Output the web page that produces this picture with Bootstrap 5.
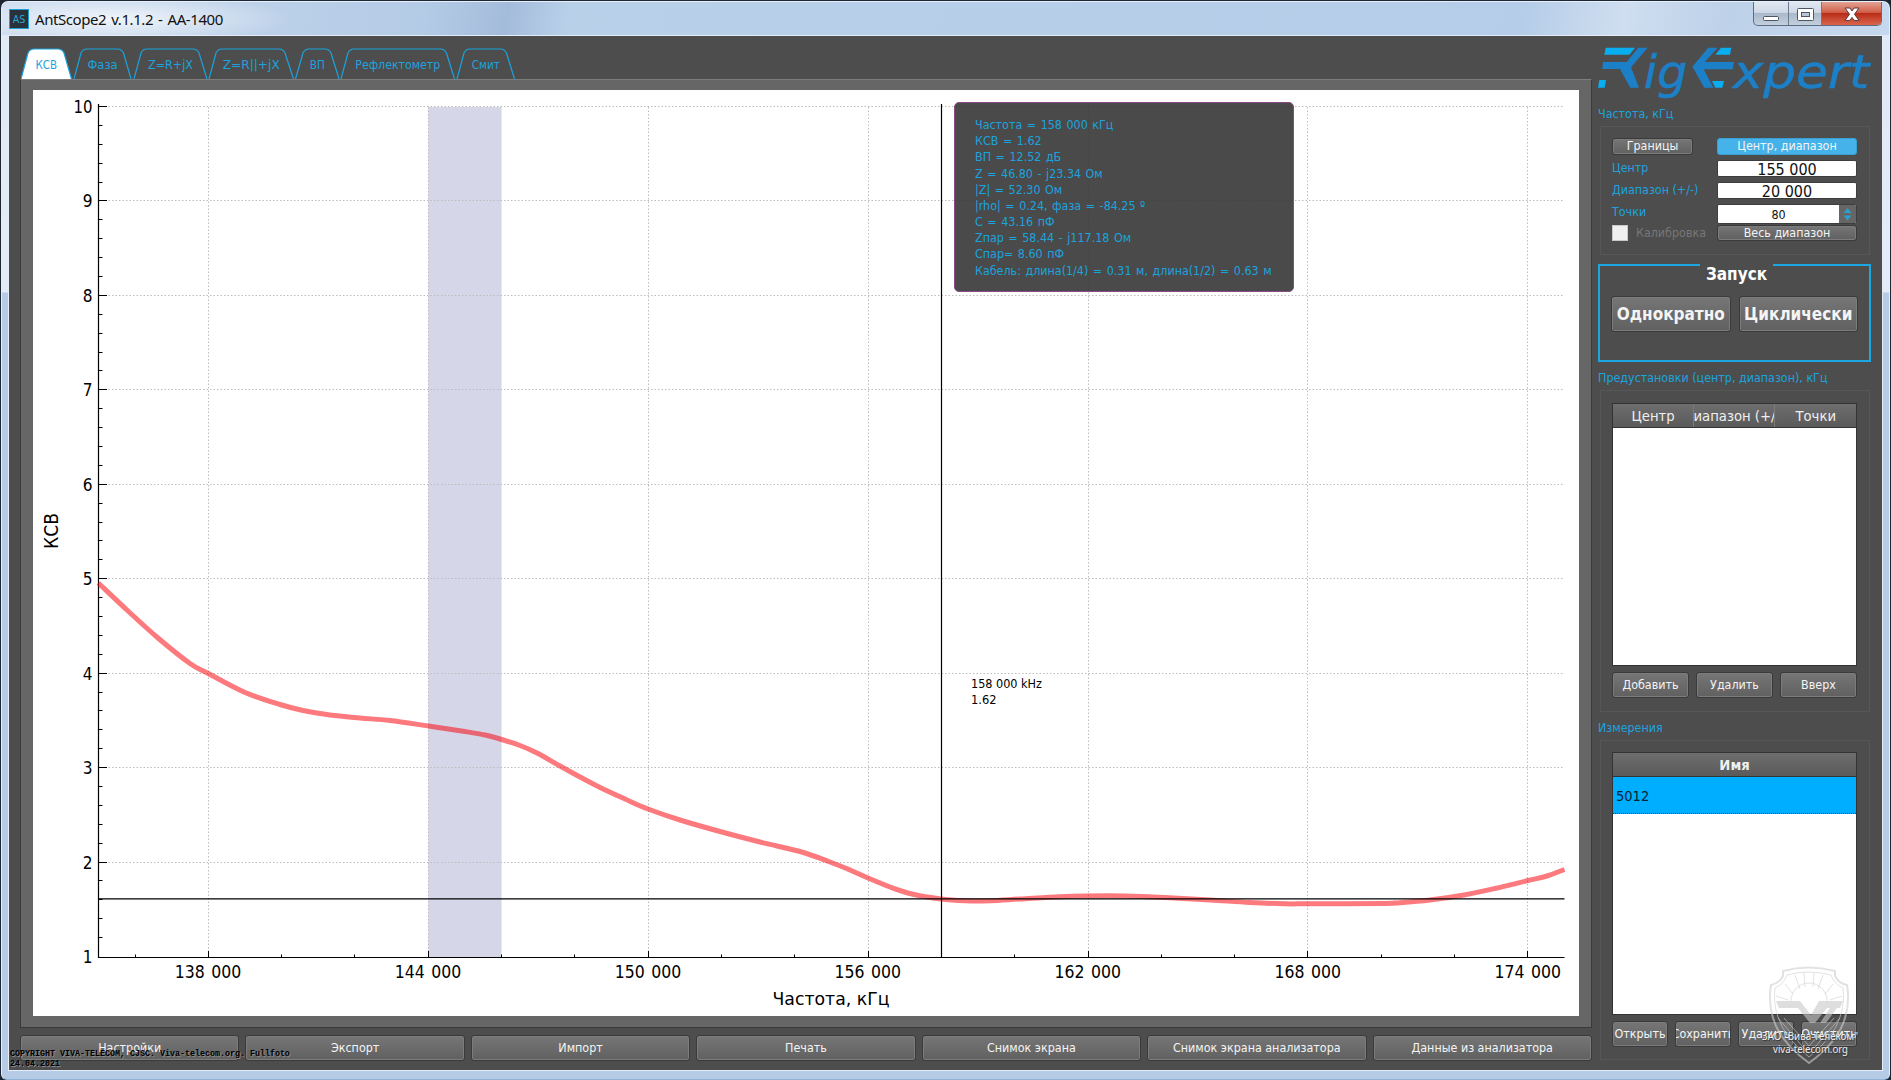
<!DOCTYPE html>
<html lang="ru">
  <head>
    <meta charset="UTF-8" />
    <meta name="viewport" content="width=device-width, initial-scale=1.0" />
    <title>AntScope2 v.1.1.2 - AA-1400</title>
    <link
      href="https://cdn.jsdelivr.net/npm/bootstrap@5.3.0/dist/css/bootstrap.min.css"
      rel="stylesheet"
    />
    <style>
      body {
        font-family: 'DejaVu Sans Condensed', 'Noto Sans', sans-serif;
        font-size: 12.4px;
        line-height: 16px;
        background-color: #1d2733;
        width: 1891px;
        height: 1080px;
        overflow: hidden;
      }

      .app-window {
        height: 1079px;
        margin: 1px 1px 0 1px;
        border: 1px solid #e6effa;
        border-bottom-color: #8fb4d8;
        border-radius: 7px 7px 6px 6px;
        background: linear-gradient(#dfe9f5 0, #e3ecf7 290px, #b5cbe6 291px, #b5cbe6 100%);
        padding: 0 6px 7px 6px;
      }

      .title-bar {
        height: 33px;
        margin: 0 -6px;
        padding-left: 7px;
        border-radius: 6px 6px 0 0;
        background:
          radial-gradient(ellipse 180px 26px at 110px 17px, rgba(255, 255, 255, 0.75), transparent),
          linear-gradient(100deg, #c9daee 0, #b4cbe6 420px, #a4bcdb 500px, #b9d0e9 560px, #b5cde8 1500px, #cfdef0 1600px, #bdd1e9 1700px, #c6d8ee 100%);
      }

      .app-icon {
        width: 20px;
        height: 20px;
        background-color: #29323a;
        border: 1px solid #1e9fd8;
        color: #2aa5dc;
        font-size: 10.5px;
        line-height: 18px;
      }

      .title-text {
        font-family: 'Noto Sans', sans-serif;
        font-size: 15px;
        color: #111;
        letter-spacing: -0.42px;
        word-spacing: 1.5px;
        margin-left: 6px;
      }

      .window-buttons {
        height: 24px;
        margin-right: 7px;
        border: 1px solid #5d6c80;
        border-top: 0;
        border-radius: 0 0 5px 5px;
        overflow: hidden;
        background: linear-gradient(#dfe7f1 0, #cfd9e6 45%, #aab9cb 50%, #c2cfde 100%);
      }

      .window-buttons span {
        width: 35px;
        border-right: 1px solid #6b7a8d;
      }

      .window-buttons span.max {
        width: 33px;
      }

      .window-buttons span.close-x {
        width: 59px;
        border: 0;
        background: linear-gradient(#e2a393 0, #d2604b 45%, #b92d17 50%, #d9654c 100%);
      }

      .client {
        height: 1036px;
        background-color: #4d4d4d;
        border: 1px solid #e4edf7;
        padding: 12px 11px 0 11px;
      }

      .main-pane {
        width: 1572px;
      }

      .tab-strip {
        height: 31px;
        margin-left: 1px;
      }

      .chart-panel {
        height: 949px;
        border: 1px solid #3a3a3a;
        border-top-color: #7d7d7d;
        background-color: #666;
        padding: 10px 12px 11px 12px;
      }

      .chart-box {
        background-color: #fff;
      }

      .marker-info {
        position: absolute;
        left: 921px;
        top: 12px;
        width: 340px;
        height: 190px;
        padding: 14px 0 0 20px;
        border: 1px solid #8a4a86;
        border-radius: 5px;
        background-color: rgba(54, 54, 54, 0.9);
        color: #1ba3dd;
        line-height: 16.17px;
        word-spacing: 1px;
        white-space: nowrap;
      }

      .btn-rig {
        --bs-btn-padding-x: 0;
        --bs-btn-padding-y: 0;
        --bs-btn-font-size: 12.4px;
        --bs-btn-line-height: 1;
        --bs-btn-color: #f4f4f4;
        --bs-btn-border-color: #3a3a3a;
        --bs-btn-border-radius: 3px;
        display: flex;
        align-items: center;
        justify-content: center;
        overflow: hidden;
        white-space: nowrap;
        background: linear-gradient(#767676, #606060);
        box-shadow: inset 0 0 0 1px #7c7c7c;
      }

      .btn-rig.active-mode {
        background: #45b3ea;
        border-color: #3aa0d4;
        box-shadow: none;
      }

      .btn-rig.run {
        font-size: 17px;
        font-weight: 700;
        height: 36px;
      }

      .bottom-bar {
        margin-top: 7px;
        gap: 6px;
      }

      .bottom-bar .btn-rig,
      .btn-h {
        height: 26px;
      }

      .side-pane {
        width: 273px;
        color: #1ba3dd;
      }

      .side-pane svg {
        overflow: visible;
      }

      .caption {
        height: 16px;
      }

      .group-box {
        border: 1px solid #575757;
        margin: 0 1px 0 2px;
        padding: 12px 12px 0 11px;
      }

      .form-grid {
        display: grid;
        grid-template-columns: 105px 140px;
        grid-template-rows: 17px 17px 17px 20px 16px;
        row-gap: 5px;
        margin-top: -1px;
      }

      .last-row {
        margin: -4px 0 4px 0;
      }

      .dim {
        color: #777;
      }

      .field {
        background-color: #fff;
        color: #111;
        text-align: center;
        border: 1px solid #3d3d3d;
        border-radius: 2px;
        font-size: 16px;
        overflow: hidden;
      }

      .field.big {
        line-height: 17px;
      }

      .field.spin {
        font-size: 12.4px;
        line-height: 19px;
      }

      .spin-arrows {
        width: 17px;
        background: #666;
      }

      .check-square {
        width: 16px;
        height: 16px;
        background: #efefef;
        border: 1px solid #c8c8c8;
      }

      .run-box {
        height: 98px;
        margin-top: 9px;
        border: 2px solid #1ba8e0;
        padding: 0 11px;
      }

      .run-title {
        width: 73px;
        margin: -4px auto 10px auto;
        position: relative;
        left: 2px;
        height: 24px;
        line-height: 24px;
        background-color: #4d4d4d;
        color: #fff;
        font-size: 17px;
        font-weight: 700;
      }

      .list-view {
        border: 1px solid #333;
        background-color: #fff;
        height: 263px;
      }

      .list-head {
        background: linear-gradient(#6e6e6e, #5a5a5a);
        border-bottom: 1px solid #333;
        color: #f0f0f0;
        font-size: 14.7px;
        height: 24px;
      }

      .list-head > div {
        overflow: hidden;
        white-space: nowrap;
        border-right: 1px solid #7b7b7b;
      }

      .list-head > div:last-child {
        border-right: 0;
      }

      .selected-row {
        height: 37px;
        background-color: #00aeff;
        border-bottom: 1px dotted #1b4b66;
        color: #0b2433;
        font-size: 14.5px;
        line-height: 38px;
        padding-left: 3px;
      }

      .list-actions {
        margin-top: 6px;
        gap: 7px;
      }

      .watermark {
        position: absolute;
        left: 1758px;
        top: 965px;
      }

      .copyright {
        position: absolute;
        left: 10px;
        top: 1049px;
        font-family: 'Liberation Mono', monospace;
        font-size: 8.33px;
        line-height: 10px;
        font-weight: 700;
        color: #000;
        text-shadow: 1px 1px 0 #8a8a8a;
        white-space: pre;
      }
    </style>
  </head>
  <body>
    <div class="app-window">
      <div class="title-bar d-flex justify-content-between">
        <div class="d-flex align-items-center">
          <div class="app-icon text-center">AS</div>
          <div class="title-text">AntScope2 v.1.1.2 - AA-1400</div>
        </div>
        <div class="window-buttons d-flex">
          <span class="d-flex align-items-center justify-content-center">
            <svg width="18" height="20"><rect x="1.5" y="12.5" width="15" height="4" rx="1" fill="#fff" stroke="#4b5563" /></svg>
          </span>
          <span class="max d-flex align-items-center justify-content-center">
            <svg width="19" height="20">
              <rect x="1.5" y="4.5" width="16" height="12" rx="1" fill="#fff" stroke="#4b5563" />
              <rect x="5.5" y="8.5" width="8" height="4" fill="#b9c6d5" stroke="#4b5563" />
            </svg>
          </span>
          <span class="close-x d-flex align-items-center justify-content-center">
            <svg width="18" height="20">
              <path d="M2 4h5l2 3 2-3h5l-4.500 6.200 4.500 6.200h-5l-2-3-2 3h-5l4.500-6.200z" fill="#fff" stroke="#5a3a3c" />
            </svg>
          </span>
        </div>
      </div>

      <div class="client d-flex justify-content-between">
        <div class="main-pane">
          <svg class="tab-strip d-block" id="tabs" width="1570" height="31" viewBox="21 48 1570 31"></svg>
          <div class="chart-panel">
            <div class="chart-box position-relative">
              <svg class="d-block" id="chart" width="1546" height="926" viewBox="33 90 1546 926"></svg>
              <div class="marker-info">
                <div>Частота = 158 000 кГц</div>
                <div>КСВ = 1.62</div>
                <div>ВП = 12.52 дБ</div>
                <div>Z = 46.80 - j23.34 Ом</div>
                <div>|Z| = 52.30 Ом</div>
                <div>|rho| = 0.24, фаза = -84.25 º</div>
                <div>C = 43.16 пФ</div>
                <div>Zпар = 58.44 - j117.18 Ом</div>
                <div>Cпар= 8.60 пФ</div>
                <div>Кабель: длина(1/4) = 0.31 м, длина(1/2) = 0.63 м</div>
              </div>
            </div>
          </div>
          <div class="bottom-bar d-flex">
            <button class="btn btn-rig w-100">Настройки</button>
            <button class="btn btn-rig w-100">Экспорт</button>
            <button class="btn btn-rig w-100">Импорт</button>
            <button class="btn btn-rig w-100">Печать</button>
            <button class="btn btn-rig w-100">Снимок экрана</button>
            <button class="btn btn-rig w-100">Снимок экрана анализатора</button>
            <button class="btn btn-rig w-100">Данные из анализатора</button>
          </div>
        </div>

        <div class="side-pane">
          <svg class="d-block" width="273" height="58" viewBox="84 144 819 174">
            <g fill="#1c80c8">
              <path d="M205 143h28l-50 59 24 61h-26l-31-56h-53l2-21h71z" />
              <path d="M415 143h28l-39 43h88l-4 22h-87l29 55h-27l-36-63z" />
            </g>
            <g fill="#08aef0">
              <path d="M107 143h88l-17 21h-75z" />
              <path d="M88 240h20l-4 23h-20z" />
              <path d="M453 143h31l-4 21h-44z" />
              <path d="M426 243h36l-5 20h-21z" />
            </g>
            <g fill="#1c80c8" stroke="#1c80c8" stroke-width="1.5" font-family="DejaVu Sans, sans-serif" font-size="138" font-style="italic">
              <text x="222" y="263" textLength="130" lengthAdjust="spacingAndGlyphs">ig</text>
              <text x="488" y="263" textLength="410" lengthAdjust="spacingAndGlyphs">xpert</text>
            </g>
          </svg>
          <div class="caption">Частота, кГц</div>
          <div class="group-box mt-1" style="height: 129px">
            <div class="form-grid">
              <button class="btn btn-rig me-4">Границы</button>
              <button class="btn btn-rig active-mode">Центр, диапазон</button>
              <div>Центр</div>
              <div class="field big">155 000</div>
              <div>Диапазон (+/-)</div>
              <div class="field big">20 000</div>
              <div>Точки</div>
              <div class="field spin d-flex">
                <div class="flex-fill">80</div>
                <svg class="spin-arrows" viewBox="0 0 17 18">
                  <path d="M4.500 8l4-5 4 5zM4.500 10.500l4 5 4-5z" fill="#2d9fc9" />
                </svg>
              </div>
              <div class="last-row dim d-flex align-items-center">
                <div class="check-square me-2"></div>
                Калибровка
              </div>
              <button class="btn btn-rig last-row">Весь диапазон</button>
            </div>
          </div>

          <div class="run-box">
            <div class="run-title text-center">Запуск</div>
            <div class="d-flex gap-2">
              <button class="btn btn-rig run w-50">Однократно</button>
              <button class="btn btn-rig run w-50">Циклически</button>
            </div>
          </div>

          <div class="caption mt-2">Предустановки (центр, диапазон), кГц</div>
          <div class="group-box mt-1" style="height: 322px">
            <div class="list-view">
              <div class="list-head d-flex">
                <div class="d-flex w-100 justify-content-center align-items-center">Центр</div>
                <div class="d-flex w-100 justify-content-center align-items-center">Диапазон (+/-)</div>
                <div class="d-flex w-100 justify-content-center align-items-center">Точки</div>
              </div>
            </div>
            <div class="list-actions d-flex">
              <button class="btn btn-rig btn-h w-100">Добавить</button>
              <button class="btn btn-rig btn-h w-100">Удалить</button>
              <button class="btn btn-rig btn-h w-100">Вверх</button>
            </div>
          </div>

          <div class="caption mt-2">Измерения</div>
          <div class="group-box mt-1" style="height: 320px; padding-top: 11px">
            <div class="list-view">
              <div class="list-head d-flex align-items-center justify-content-center fw-bold">Имя</div>
              <div class="selected-row">5012</div>
            </div>
            <div class="list-actions d-flex">
              <button class="btn btn-rig btn-h w-100">Открыть</button>
              <button class="btn btn-rig btn-h w-100">Сохранить</button>
              <button class="btn btn-rig btn-h w-100">Удалить</button>
              <button class="btn btn-rig btn-h w-100">Очистить</button>
            </div>
          </div>
        </div>
      </div>
    </div>

    <svg class="watermark" width="104" height="102" viewBox="1758 965 104 102">
      <g fill="none" stroke="#cfcfcf" stroke-opacity="0.6">
        <path d="M1783 971q26-7 52 0l0 5q3 7 12 9q3 17-2 33q-7 24-36 45q-29-21-36-45q-5-16-2-33q9-2 12-9z" stroke-width="2" />
        <path d="M1787 975q22-6 44 0q3 9 12 13q2 15-3 29q-6 20-31 40q-25-20-31-40q-5-14-3-29q9-4 12-13z" />
        <path d="M1804 973l1 14M1814 973l-1 14M1795 975l5 14M1823 975l-5 14M1785 984l8 10M1833 984l-8 10M1776 996l12 4M1842 996l-12 4" />
        <path d="M1791 1001a18 18 0 0 1 36 0" />
        <path d="M1778 1018l31 36 31-36M1784 1018l25 28 25-28" />
      </g>
      <path d="M1776 1001h24l11 14 8-14h24l-3 7h-3l-11 15h-6l10-15h-3l-12 15h-5l-12-15h-19z" fill="#c8c8c8" fill-opacity="0.6" />
      <g font-family="Noto Sans, sans-serif" font-size="11.5" fill="#eee" style="text-shadow: 1px 1px 1px #333">
        <text x="1762" y="1040" textLength="96" lengthAdjust="spacingAndGlyphs">ЗАО "Вива-Телеком"</text>
        <text x="1773" y="1053" textLength="75" lengthAdjust="spacingAndGlyphs">viva-telecom.org</text>
      </g>
    </svg>

    <div class="copyright">COPYRIGHT VIVA-TELECOM, CJSC. Viva-telecom.org. Fullfoto
24.04.2021</div>

    <script>
      // label, left foot, left top, right top, right foot
      const tabs = [
        ['КСВ', 21, 30, 62, 71.5],
        ['Фаза', 74, 83, 121.5, 131],
        ['Z=R+jX', 134, 143, 197, 207],
        ['Z=R||+jX', 209, 218, 283, 293.5],
        ['ВП', 295.5, 305, 329, 339],
        ['Рефлектометр', 341, 350, 444.5, 454.5],
        ['Смит', 457, 466, 504.5, 514.5],
      ];
      const labelWidths = [21.5, 30, 45, 57, 15, 85, 28];

      let tabMarkup = '';
      tabs.forEach(([label, x0, x1, x2, x3], i) => {
        const active = i === 0;
        tabMarkup += `<path d="M${x0} 79L${x1 - 2} 53Q${x1} 49 ${x1 + 4} 49H${x2 - 4}Q${x2} 49 ${x2 + 2} 53L${x3} 79"
          fill="${active ? '#fff' : '#4d4d4d'}" stroke="#1ba3dd" stroke-width="1.2"/>
          <text x="${(x0 + x3) / 2 - labelWidths[i] / 2}" y="69" font-size="12" fill="#1ba3dd"
          textLength="${labelWidths[i]}" lengthAdjust="spacingAndGlyphs">${label}</text>`;
      });
      document.getElementById('tabs').innerHTML = tabMarkup;

      const px = (mhz) => 98.35 + (mhz - 135) * 36.655;
      const py = (swr) => 957 - (swr - 1) * 94.45;
      const snapX = (v) => Math.floor(v) + 0.5;
      const snapY = (v) => Math.round(v) - 0.5;

      const curve = [
        [98.3, 583], [128, 611], [158, 638], [190, 663.5], [208.3, 673.5], [245, 692.5],
        [280, 704.5], [303, 710.5], [330, 715], [360, 718], [390, 720.5], [428.3, 726],
        [465, 731.5], [485, 735], [501.7, 739.5], [520, 745.5], [537, 753], [560, 766],
        [580, 777], [600, 787.5], [625, 799], [648, 809], [680, 820], [720, 831.5],
        [760, 842], [800, 851.5], [830, 862], [850, 870], [868, 878], [890, 887],
        [912, 894], [941, 899], [965, 900.7], [990, 900.7], [1020, 899], [1060, 896.7],
        [1087, 896], [1125, 896], [1165, 897.5], [1210, 900], [1250, 902.5], [1285, 903.8],
        [1310, 903.8], [1380, 903.6], [1400, 902.7], [1430, 900], [1464, 895], [1495, 888.5],
        [1528, 880.5], [1547, 876], [1564.5, 869.5],
      ];

      // Catmull-Rom through the points
      function smoothPath(p) {
        let d = `M${p[0]}`;
        for (let i = 0; i < p.length - 1; i++) {
          const a = p[i - 1] || p[i];
          const b = p[i];
          const c = p[i + 1];
          const e = p[i + 2] || c;
          d += `C${b[0] + (c[0] - a[0]) / 6} ${b[1] + (c[1] - a[1]) / 6} ${c[0] - (e[0] - b[0]) / 6} ${c[1] - (e[1] - b[1]) / 6} ${c}`;
        }
        return d;
      }

      let s = '';
      s += `<rect x="${px(144)}" y="107" width="${px(146) - px(144)}" height="850" fill="#d6d6e9"/>`;

      // grid
      for (let v = 2; v <= 10; v++) {
        s += `<path d="M98 ${snapY(py(v))}H1564" stroke="#bcbcbc" stroke-dasharray="1.5 2"/>`;
      }
      for (let f = 138; f <= 174; f += 6) {
        s += `<path d="M${snapX(px(f))} 107V957" stroke="#bcbcbc" stroke-dasharray="1.5 2"/>`;
      }

      // axes and ticks
      s += '<path d="M98.500 104V957.500H1564.500" fill="none" stroke="#000" stroke-width="1.2"/>';
      for (let i = 1; i <= 45; i++) {
        const y = snapY(py(1 + i * 0.2));
        s += `<path d="M98 ${y}h${i % 5 === 0 ? 9 : 4.5}" stroke="#000"/>`;
      }
      for (let f = 136; f <= 174; f += 2) {
        s += `<path d="M${snapX(px(f))} 957v${f % 6 === 0 ? -6 : -2.5}" stroke="#000"/>`;
      }

      s += `<path d="${smoothPath(curve)}" fill="none" stroke="#fa0008" stroke-opacity="0.52" stroke-width="5"/>`;
      s += '<path d="M98 898.800H1564.500M941.500 104V957" stroke="#000" stroke-width="1.2"/>';

      for (let v = 1; v <= 10; v++) {
        const w = v === 10 ? 19 : 9.8;
        s += `<text x="${92.5 - w}" y="${py(v) + 6}" font-size="17" textLength="${w}"
          lengthAdjust="spacingAndGlyphs">${v}</text>`;
      }
      for (let f = 138; f <= 174; f += 6) {
        s += `<text x="${px(f) - 33.5}" y="977.500" font-size="17" word-spacing="1.5" textLength="66.5"
          lengthAdjust="spacingAndGlyphs">${f} 000</text>`;
      }
      s += `<text x="772.5" y="1004.500" font-size="18.5" textLength="117" lengthAdjust="spacingAndGlyphs">Частота, кГц</text>`;
      s += `<text transform="translate(58 549) rotate(-90)" font-size="19.5" textLength="36" lengthAdjust="spacingAndGlyphs">КСВ</text>`;
      s += `<g font-size="12"><text x="971" y="688" textLength="71" lengthAdjust="spacingAndGlyphs">158 000 kHz</text>
        <text x="971" y="704" textLength="25.5" lengthAdjust="spacingAndGlyphs">1.62</text></g>`;
      document.getElementById('chart').innerHTML = s;
    </script>

    <script src="https://cdn.jsdelivr.net/npm/bootstrap@5.3.0/dist/js/bootstrap.bundle.min.js"></script>
  </body>
</html>
